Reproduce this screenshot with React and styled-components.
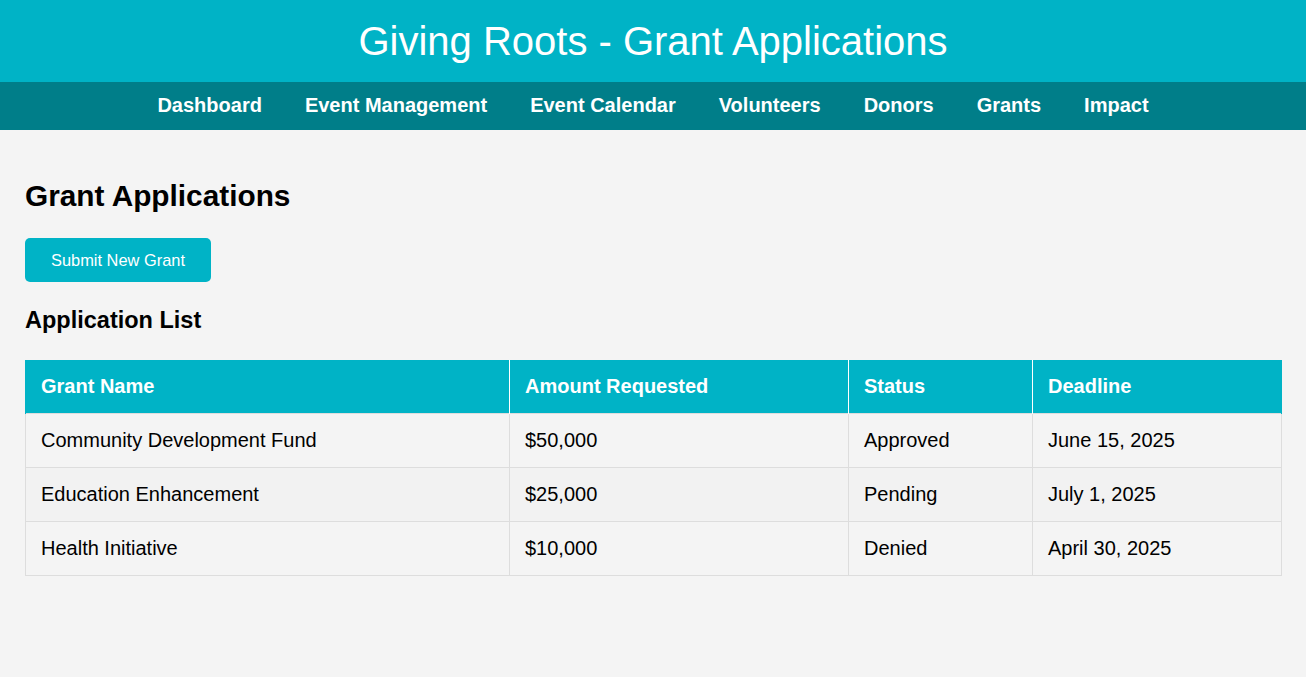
import React from "react";
import styled, { createGlobalStyle } from "styled-components";

const GlobalStyle = createGlobalStyle`
  html, body { margin: 0; padding: 0; }
  body {
    background: #f4f4f4;
    font-family: "Liberation Sans", Arial, sans-serif;
    color: #000;
  }
`;

const Header = styled.header`
  background: #00b3c6;
  color: #fff;
  padding: 18px 0;
  text-align: center;
`;

const Title = styled.h1`
  margin: 0;
  font-size: 40px;
  line-height: 46px;
  font-weight: normal;
`;

const Nav = styled.nav`
  background: #007e89;
  display: flex;
  justify-content: center;
  gap: 43px;
  padding: 11px 0 13px;
`;

const NavLink = styled.a`
  color: #fff;
  font-size: 20px;
  line-height: 24px;
  font-weight: bold;
  text-decoration: none;
`;

const Main = styled.main`
  padding: 48px 25px;
`;

const PageTitle = styled.h2`
  margin: 0 0 25px;
  font-size: 29.8px;
  line-height: 35px;
  font-weight: bold;
`;

const Button = styled.button`
  display: block;
  background: #00b3c6;
  color: #fff;
  border: none;
  border-radius: 5px;
  font-family: inherit;
  font-size: 16.4px;
  line-height: 18px;
  padding: 13px 26px;
  width: 186px;
  margin: 0 0 24px;
  cursor: pointer;
`;

const SectionTitle = styled.h3`
  margin: 0 0 26px;
  font-size: 23.5px;
  line-height: 28px;
  font-weight: bold;
`;

const Table = styled.table`
  width: 100%;
  border-collapse: collapse;
  table-layout: fixed;
`;

const Th = styled.th`
  background: #00b3c6;
  color: #fff;
  text-align: left;
  font-size: 20px;
  line-height: 23px;
  font-weight: bold;
  padding: 14px 15px 15px;
  border: 1px solid #ddd;
  border-top-color: #00b3c6;
  border-left-color: ${(p) => (p.$first ? "#00b3c6" : "#fff")};
  border-right-color: ${(p) => (p.$last ? "#00b3c6" : "#fff")};
  border-bottom: none;
`;

const Row = styled.tr`
  background: ${(p) => (p.$even ? "#f2f2f2" : "#f4f4f4")};
`;

const Td = styled.td`
  font-size: 20px;
  line-height: 23px;
  padding: 15px 15px;
  border: 1px solid #ddd;
`;

const navItems = [
  "Dashboard",
  "Event Management",
  "Event Calendar",
  "Volunteers",
  "Donors",
  "Grants",
  "Impact",
];

const columns = [
  { label: "Grant Name", width: 484 },
  { label: "Amount Requested", width: 339 },
  { label: "Status", width: 184 },
  { label: "Deadline", width: 249 },
];

const grants = [
  ["Community Development Fund", "$50,000", "Approved", "June 15, 2025"],
  ["Education Enhancement", "$25,000", "Pending", "July 1, 2025"],
  ["Health Initiative", "$10,000", "Denied", "April 30, 2025"],
];

export default function App() {
  return (
    <>
      <GlobalStyle />
      <Header>
        <Title>Giving Roots - Grant Applications</Title>
      </Header>
      <Nav>
        {navItems.map((n) => (
          <NavLink key={n} href="#">
            {n}
          </NavLink>
        ))}
      </Nav>
      <Main>
        <PageTitle>Grant Applications</PageTitle>
        <Button>Submit New Grant</Button>
        <SectionTitle>Application List</SectionTitle>
        <Table>
          <colgroup>
            {columns.map((c) => (
              <col key={c.label} style={{ width: c.width }} />
            ))}
          </colgroup>
          <thead>
            <tr>
              {columns.map((c, i) => (
                <Th key={c.label} $first={i === 0} $last={i === columns.length - 1}>
                  {c.label}
                </Th>
              ))}
            </tr>
          </thead>
          <tbody>
            {grants.map((g, i) => (
              <Row key={g[0]} $even={i % 2 === 1}>
                {g.map((v, j) => (
                  <Td key={j}>{v}</Td>
                ))}
              </Row>
            ))}
          </tbody>
        </Table>
      </Main>
    </>
  );
}
